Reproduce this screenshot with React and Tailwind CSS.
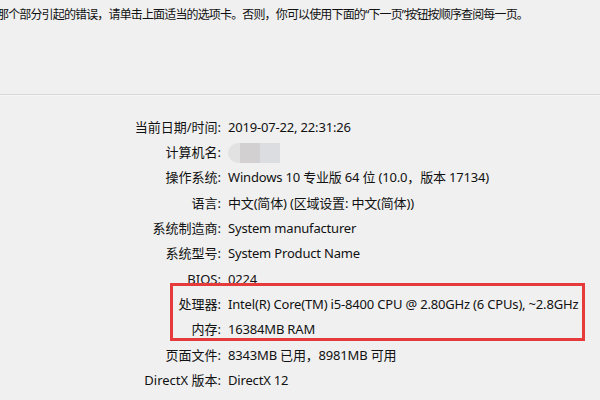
import React from 'react';

const rows = [
  ['当前日期/时间:', '2019-07-22, 22:31:26'],
  ['计算机名:', null],
  ['操作系统:', 'Windows 10 专业版 64 位 (10.0，版本 17134)'],
  ['语言:', '中文(简体) (区域设置: 中文(简体))'],
  ['系统制造商:', 'System manufacturer'],
  ['系统型号:', 'System Product Name'],
  ['BIOS:', '0224'],
  ['处理器:', 'Intel(R) Core(TM) i5-8400 CPU @ 2.80GHz (6 CPUs), ~2.8GHz'],
  ['内存:', '16384MB RAM'],
  ['页面文件:', '8343MB 已用，8981MB 可用'],
  ['DirectX 版本:', 'DirectX 12'],
];

function BlurredName() {
  return (
    <div className="flex h-[20px] items-stretch overflow-hidden rounded-l-full">
      <div className="w-[12px] bg-[#e2e2e2]" />
      <div className="w-[20px] bg-[#d2d0d0]" />
      <div className="w-[20px] bg-[#dcdde0]" />
    </div>
  );
}

export default function App() {
  return (
    <div
      className="relative w-[600px] h-[400px] overflow-hidden bg-[#f0f0f0] text-[#111]"
      style={{ fontFamily: '"Noto Sans", "Noto Sans CJK SC", sans-serif' }}
    >
      <div className="h-[94px] pt-[5px] -ml-[3px] text-[12px] leading-[20px] whitespace-nowrap tracking-[-0.85px]">
        那个部分引起的错误，请单击上面适当的选项卡。否则，你可以使用下面的“下一页”按钮按顺序查阅每一页。
      </div>
      <div className="h-[2px] bg-[#d8d8d8] border-b border-[#f6f6f6]" />

      <div className="pt-[19px] text-[13px]">
        {rows.map(([label, value]) => (
          <div key={label} className="flex h-[25.3px] items-center whitespace-nowrap">
            <div className="w-[228px] text-right pr-[7px]">{label}</div>
            <div className="flex-1 tracking-[-0.18px]">{value === null ? <BlurredName /> : value}</div>
          </div>
        ))}
      </div>

      <div className="absolute left-[170px] top-[283px] w-[415px] h-[58px] border-[3px] border-[#e53b3b]" />
    </div>
  );
}
